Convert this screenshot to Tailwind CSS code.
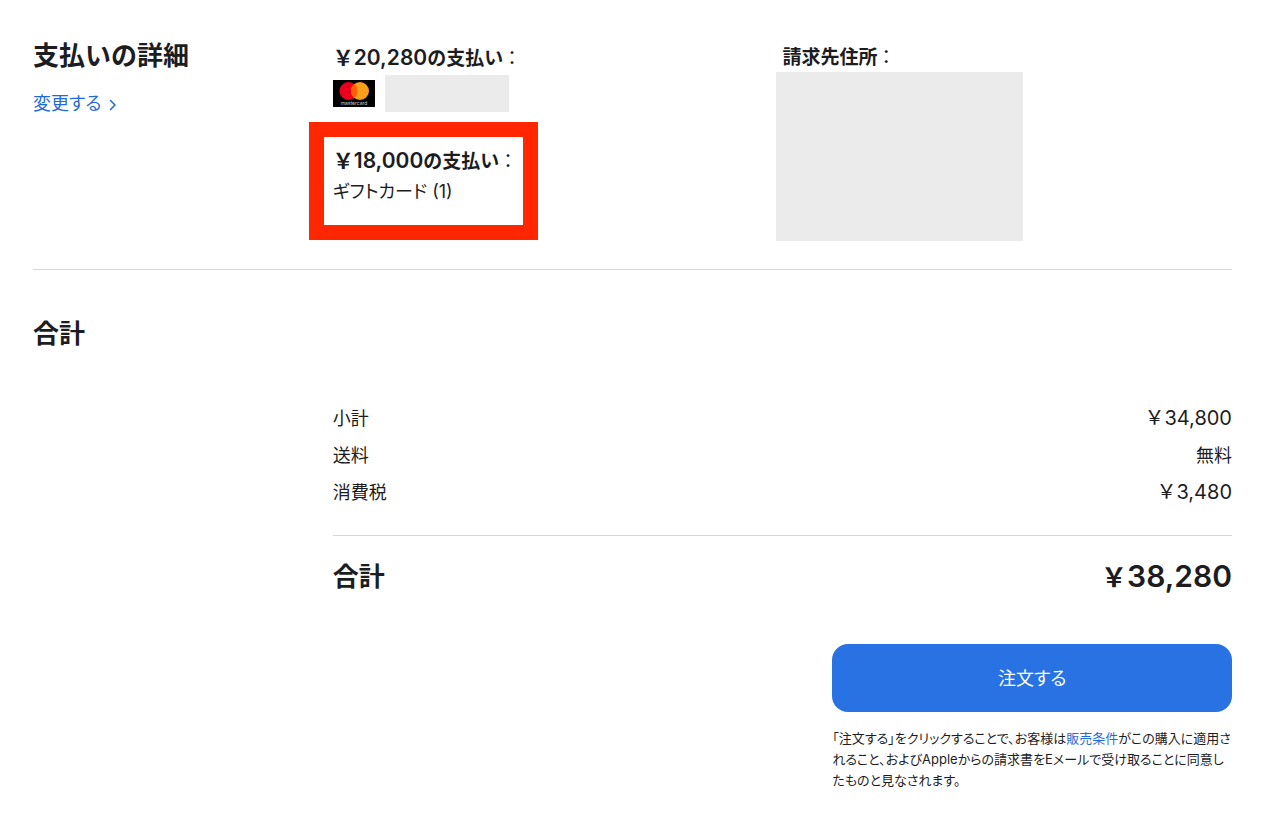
<!DOCTYPE html>
<html lang="ja">
<head>
  <meta charset="UTF-8" />
  <meta name="viewport" content="width=device-width, initial-scale=1.0" />
  <title>ご注文の確認</title>
  <script src="https://cdn.jsdelivr.net/npm/@tailwindcss/browser@4"></script>
</head>
<body class="bg-white text-[#1d1d1f] font-['Inter','Noto_Sans_CJK_JP',sans-serif]">
  <main class="pl-[33px] pr-9 pt-10 pb-10">

    <!-- Payment details -->
    <section class="grid grid-cols-4 border-b border-[#d6d6d6] pb-7">
      <div>
        <h2 class="text-[26px] leading-8 font-bold">支払いの詳細</h2>
        <a href="#" class="mt-5 inline-flex items-center gap-2 text-[18px] leading-6 text-[#1f6bd6] [font-feature-settings:'palt']">
          変更する
          <svg class="w-2 h-3 mt-0.5" viewBox="0 0 8 12" fill="none" stroke="currentColor" stroke-width="1.5" stroke-linecap="round" stroke-linejoin="round" aria-hidden="true"><path d="M1.5 1.5 6 6l-4.500 4.500" /></svg>
        </a>
      </div>

      <div class="col-span-3 grid grid-cols-2 pt-1">
        <div>
          <h3 class="text-[19px] leading-7 font-bold"><span class="text-[21px] font-semibold">￥20,280</span>の支払い<span class="ml-1 font-normal [font-feature-settings:'palt']">：</span></h3>
          <div class="mt-0.5 flex items-center gap-2.5">
            <svg class="w-[42px] h-[27px]" viewBox="0 0 42 27" role="img" aria-label="Mastercard">
              <rect width="42" height="27" fill="#000" />
              <circle cx="15.500" cy="11" r="9" fill="#eb001b" />
              <circle cx="27" cy="11" r="9" fill="#f79e1b" />
              <path d="M21.250 4.100a9 9 0 0 1 0 13.800 9 9 0 0 1 0-13.800z" fill="#ff5f00" />
              <text x="21" y="25" fill="#ccc" font-size="5" text-anchor="middle">mastercard</text>
            </svg>
            <div class="w-[124px] h-[37px] bg-[#ebebeb]"></div>
          </div>
          <!-- Highlighted gift card payment -->
          <div class="mt-2.5 -ml-6 w-[229px] border-[15px] border-[#ff2600] pt-2 pl-[9px] pb-[19px] whitespace-nowrap">
            <h3 class="text-[19px] leading-8 font-bold"><span class="text-[21px] font-semibold">￥18,000</span>の支払い<span class="ml-1 font-normal [font-feature-settings:'palt']">：</span></h3>
            <p class="text-[18px] leading-7 [font-feature-settings:'palt']">ギフトカード (1)</p>
          </div>
        </div>
        <div>
          <h3 class="text-[19px] leading-7 font-bold">請求先住所<span class="ml-1 font-normal [font-feature-settings:'palt']">：</span></h3>
          <div class="-ml-1.5 w-[247px] h-[169px] bg-[#ebebeb]"></div>
        </div>
      </div>
    </section>

    <!-- Totals -->
    <section class="pt-12">
      <h2 class="text-[26px] leading-8 font-bold">合計</h2>
      <div class="ml-[25%] mt-[50px]">
        <table class="w-full text-[18px] leading-[37px]">
          <tbody>
            <tr>
              <th scope="row" class="text-left font-normal">小計</th>
              <td class="text-right text-[20px]">￥34,800</td>
            </tr>
            <tr>
              <th scope="row" class="text-left font-normal">送料</th>
              <td class="text-right">無料</td>
            </tr>
            <tr>
              <th scope="row" class="pb-6 text-left font-normal">消費税</th>
              <td class="pb-6 text-right text-[20px]">￥3,480</td>
            </tr>
          </tbody>
          <tfoot class="border-t border-[#d6d6d6] leading-8">
            <tr>
              <th scope="row" class="pt-6 text-left text-[26px] font-bold">合計</th>
              <td class="pt-6 text-right text-[30px] font-semibold"><span class="text-[26px]">￥</span>38,280</td>
            </tr>
          </tfoot>
        </table>
      </div>

      <div class="ml-auto mt-[50px] w-1/3">
        <button type="button" class="h-[68px] w-full rounded-2xl bg-[#2872e3] text-[18px] text-white [font-feature-settings:'palt']">注文する</button>
        <p class="mt-4 text-[13px] leading-[21px] [font-feature-settings:'palt']">「注文する」をクリックすることで、お客様は<a href="#" class="text-[#1f6bd6]">販売条件</a>がこの購入に適用されること、およびAppleからの請求書をEメールで受け取ることに同意したものと見なされます。</p>
      </div>
    </section>

  </main>
</body>
</html>
